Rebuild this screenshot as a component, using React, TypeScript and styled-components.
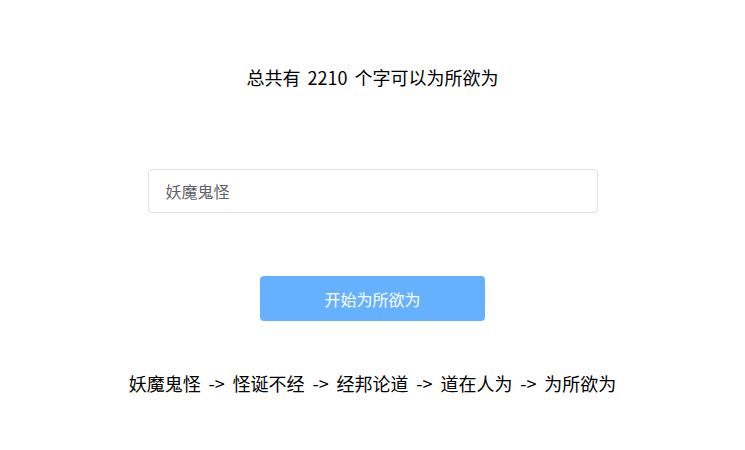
import React from "react";
import styled, { createGlobalStyle } from "styled-components";

const Global = createGlobalStyle`
  html, body { margin: 0; padding: 0; background: #fff; }
  body { font-family: "Noto Sans CJK SC", "Noto Sans", sans-serif; color: #000; }
  * { box-sizing: border-box; }
`;

const Page = styled.div`
  display: flex;
  flex-direction: column;
  align-items: center;
  padding-top: 65px;
`;

const Title = styled.div`
  font-size: 18px;
  line-height: 24px;
  color: #000;
  word-spacing: 3px;
`;

const Input = styled.input`
  margin-top: 80px;
  width: 450px;
  height: 44px;
  padding: 0 17px;
  border: 1px solid #dcdfe6;
  border-radius: 4px;
  font-family: inherit;
  font-size: 16px;
  color: #606266;
  outline: none;
  background: #fff;
`;

const Button = styled.button`
  margin-top: 63px;
  width: 225px;
  height: 45px;
  border: none;
  border-radius: 4px;
  background: #66b1ff;
  color: #fff;
  font-family: inherit;
  font-size: 16px;
  cursor: pointer;
`;

const Chain = styled.div`
  margin-top: 50px;
  font-size: 18px;
  line-height: 24px;
  color: #000;
  white-space: pre;
  word-spacing: 3.8px;
`;

export default function App() {
  return (
    <>
      <Global />
      <Page>
        <Title>总共有 2210 个字可以为所欲为</Title>
        <Input defaultValue="妖魔鬼怪" />
        <Button>开始为所欲为</Button>
        <Chain>妖魔鬼怪 -&gt; 怪诞不经 -&gt; 经邦论道 -&gt; 道在人为 -&gt; 为所欲为</Chain>
      </Page>
    </>
  );
}
